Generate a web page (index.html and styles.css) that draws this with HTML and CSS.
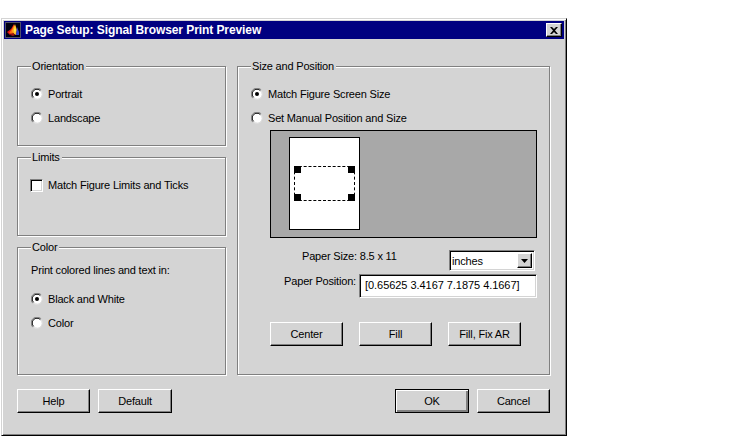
FILE: index.html
```html
<!DOCTYPE html>
<html lang="en">
<head>
<meta charset="utf-8">
<title>Page Setup: Signal Browser Print Preview</title>
<link rel="stylesheet" href="styles.css">
</head>
<body>
<div class="window">
  <div class="titlebar">
    <svg class="app-icon" width="16" height="16" viewBox="0 0 16 16">
      <rect width="16" height="16" fill="#000010"/>
      <rect x="0.500" y="0.500" width="15" height="15" fill="none" stroke="#50506a"/>
      <polygon points="2,10 6,7 9,2 9,9 5,13" fill="#e01010"/>
      <polygon points="4,11 7,7 9,3 10,8 8,12" fill="#ff7010"/>
      <polygon points="7,9 10,2 12,8 11,13 9,12" fill="#ffb020"/>
      <polygon points="9,8 10,4 11,8 10,12" fill="#fff050"/>
      <polygon points="12,5 14,10 14,13 11,13" fill="#3040d0"/>
      <polygon points="5,13 8,11 10,13 8,14" fill="#a01010"/>
    </svg>
    <span class="title-text">Page Setup: Signal Browser Print Preview</span>
    <div class="close-btn">
      <svg width="8" height="7" viewBox="0 0 8 7"><path d="M0 0h2l2 2 2-2h2L5 3.500 8 7H6L4 5 2 7H0l3-3.500z" fill="#000"/></svg>
    </div>
  </div>
  <div class="content">
    <div class="columns">
      <div class="left-col">
        <div class="group orientation">
          <span class="legend">Orientation</span>
          <div class="row"><svg class="radio" viewBox="0 0 12 12"><use href="#radio-shape"/><circle cx="6" cy="6" r="2" fill="#000"/></svg>Portrait</div>
          <div class="row"><svg class="radio" viewBox="0 0 12 12"><use href="#radio-shape"/></svg>Landscape</div>
        </div>
        <div class="group limits">
          <span class="legend">Limits</span>
          <div class="row"><span class="check"></span>Match Figure Limits and Ticks</div>
        </div>
        <div class="group color">
          <span class="legend">Color</span>
          <div class="row plain">Print colored lines and text in:</div>
          <div class="color-options">
            <div class="row"><svg class="radio" viewBox="0 0 12 12"><use href="#radio-shape"/><circle cx="6" cy="6" r="2" fill="#000"/></svg>Black and White</div>
            <div class="row"><svg class="radio" viewBox="0 0 12 12"><use href="#radio-shape"/></svg>Color</div>
          </div>
        </div>
      </div>
      <div class="group size">
        <span class="legend">Size and Position</span>
        <div class="row"><svg class="radio" viewBox="0 0 12 12"><use href="#radio-shape"/><circle cx="6" cy="6" r="2" fill="#000"/></svg>Match Figure Screen Size</div>
        <div class="row"><svg class="radio" viewBox="0 0 12 12"><use href="#radio-shape"/></svg>Set Manual Position and Size</div>
        <div class="size-inner">
          <div class="preview">
            <div class="paper">
              <div class="figure">
                <i class="handle tl"></i><i class="handle tr"></i><i class="handle bl"></i><i class="handle br"></i>
              </div>
            </div>
          </div>
          <div class="paper-size-row">
            <span class="paper-size">Paper Size: 8.5 x 11</span>
            <div class="dropdown"><span class="dropdown-text">inches</span><span class="dropdown-btn"><svg width="7" height="4" viewBox="0 0 7 4"><path d="M0 0h7L3.500 4z" fill="#000"/></svg></span></div>
          </div>
          <div class="paper-pos-row">
            <span class="paper-pos">Paper Position:</span>
            <div class="edit">[0.65625 3.4167 7.1875 4.1667]</div>
          </div>
          <div class="size-buttons">
            <div class="btn">Center</div>
            <div class="btn">Fill</div>
            <div class="btn">Fill, Fix AR</div>
          </div>
        </div>
      </div>
    </div>
    <div class="footer">
      <div class="btn-group">
        <div class="btn narrow">Help</div>
        <div class="btn">Default</div>
      </div>
      <div class="btn-group">
        <div class="btn default">OK</div>
        <div class="btn narrow">Cancel</div>
      </div>
    </div>
  </div>
</div>
<svg class="defs" width="0" height="0">
  <defs>
    <g id="radio-shape">
      <circle cx="6" cy="6" r="5.500" fill="#fff"/>
      <path d="M1.800 10.200A5.900 5.900 0 0 1 10.200 1.800" fill="none" stroke="#808080" stroke-width="1"/>
      <path d="M2.600 9.400A4.800 4.800 0 0 1 9.400 2.600" fill="none" stroke="#000" stroke-width="1"/>
      <path d="M3 9.800A4.800 4.800 0 0 0 9.800 3" fill="none" stroke="#d4d4d4" stroke-width="1"/>
    </g>
  </defs>
</svg>
</body>
</html>
```
FILE: styles.css
```css
* { box-sizing: border-box; }
html, body { margin: 0; padding: 0; background: #fff; }
body {
  font-family: "Liberation Sans", Arial, sans-serif;
  font-size: 11px;
  letter-spacing: -0.18px;
  color: #000;
  height: 439px;
  overflow: hidden;
}
.defs { position: absolute; }
.window {
  margin: 18px 0 0 1px;
  width: 566px;
  height: 418px;
  padding: 2px;
  background: #d4d4d4;
  border: 1px solid;
  border-color: #d4d4d4 #000 #000 #d4d4d4;
  box-shadow: inset 1px 1px 0 #fff, inset -1px -1px 0 #808080;
}
.titlebar {
  height: 18px;
  background: #000080;
  display: flex;
  align-items: center;
  padding: 0 2px 0 1px;
}
.app-icon { flex: none; }
.title-text {
  margin-left: 4px;
  color: #fff;
  font-weight: 700;
  font-size: 12px;
  letter-spacing: -0.08px;
}
.close-btn {
  margin-left: auto;
  width: 16px;
  height: 14px;
  background: #d4d4d4;
  border: 1px solid;
  border-color: #fff #000 #000 #fff;
  box-shadow: inset -1px -1px 0 #808080;
  display: flex;
  align-items: center;
  justify-content: center;
}
.content { padding: 27px 14px 0 13px; }
.columns {
  display: grid;
  grid-template-columns: 209px 313px;
  column-gap: 11px;
  height: 309px;
}
.left-col { display: flex; flex-direction: column; gap: 11px; }
.group {
  position: relative;
  border: 1px solid #808080;
  box-shadow: 1px 1px 0 #fff, inset 1px 1px 0 #fff;
  padding: 15px 0 0 13px;
}
.orientation { height: 80px; }
.limits { height: 79px; }
.color { height: 128px; padding-top: 10px; }
.size { height: 309px; }
.legend {
  position: absolute;
  top: -8px;
  left: 13px;
  padding: 0 2px 0 1px;
  background: #d4d4d4;
  line-height: 15px;
}
.row {
  height: 24px;
  display: flex;
  align-items: center;
  white-space: nowrap;
}
.radio { width: 12px; height: 12px; margin-right: 5px; flex: none; }
.check {
  width: 13px;
  height: 13px;
  margin-left: -1px;
  margin-right: 5px;
  background: #fff;
  border: 1px solid;
  border-color: #808080 #fff #fff #808080;
  box-shadow: inset 1px 1px 0 #000, inset -1px -1px 0 #d4d4d4;
  flex: none;
}
.color-options { margin-top: 5px; }
.size-inner { margin: 0 0 0 19px; width: 267px; }
.preview {
  height: 108px;
  background: #a8a8a8;
  border: 1px solid #000;
  padding: 6px 0 0 18px;
}
.paper {
  width: 71px;
  height: 93px;
  background: #fff;
  border: 1px solid #000;
  padding: 28px 0 0 4px;
}
.figure {
  position: relative;
  width: 61px;
  height: 35px;
  border: 1px dashed #000;
}
.handle { position: absolute; width: 7px; height: 7px; background: #000; }
.tl { top: -1px; left: -1px; }
.tr { top: -1px; right: -1px; }
.bl { bottom: -1px; left: -1px; }
.br { bottom: -1px; right: -1px; }
.paper-size-row {
  display: flex;
  height: 21px;
  margin-top: 12px;
  padding-left: 32px;
}
.paper-size { line-height: 13px; }
.dropdown {
  margin-left: auto;
  margin-right: 2px;
  width: 86px;
  height: 21px;
  background: #fff;
  border: 1px solid;
  border-color: #808080 #fff #fff #808080;
  box-shadow: inset 1px 1px 0 #000, inset -1px -1px 0 #d4d4d4;
  padding: 2px;
  display: flex;
  align-items: stretch;
}
.dropdown-text { flex: 1; line-height: 17px; }
.dropdown-btn {
  width: 15px;
  background: #d4d4d4;
  border: 1px solid;
  border-color: #fff #000 #000 #fff;
  box-shadow: inset -1px -1px 0 #808080;
  display: flex;
  align-items: center;
  justify-content: center;
}
.paper-pos-row { display: flex; margin-top: 3px; height: 24px; }
.paper-pos { width: 86px; text-align: right; line-height: 14px; margin-right: 3px; flex: none; }
.edit {
  width: 178px;
  height: 24px;
  background: #fff;
  border: 1px solid;
  border-color: #808080 #fff #fff #808080;
  box-shadow: inset 1px 1px 0 #000, inset -1px -1px 0 #d4d4d4;
  padding-left: 5px;
  line-height: 21px;
  letter-spacing: -0.05px;
  white-space: nowrap;
}
.size-buttons { display: flex; gap: 16px; margin-top: 24px; }
.size-buttons .btn { width: 73px; }
.btn {
  width: 74px;
  height: 24px;
  background: #d4d4d4;
  border: 1px solid;
  border-color: #fff #000 #000 #fff;
  box-shadow: inset -1px -1px 0 #808080;
  display: flex;
  align-items: center;
  justify-content: center;
}
.btn.narrow { width: 73px; }
.btn.default {
  outline: 1px solid #000;
  outline-offset: -1px;
  box-shadow: inset 1px 1px 0 #fff, inset -2px -2px 0 #808080;
}
.footer {
  display: flex;
  justify-content: space-between;
  margin-top: 14px;
}
.btn-group { display: flex; gap: 8px; }
```
